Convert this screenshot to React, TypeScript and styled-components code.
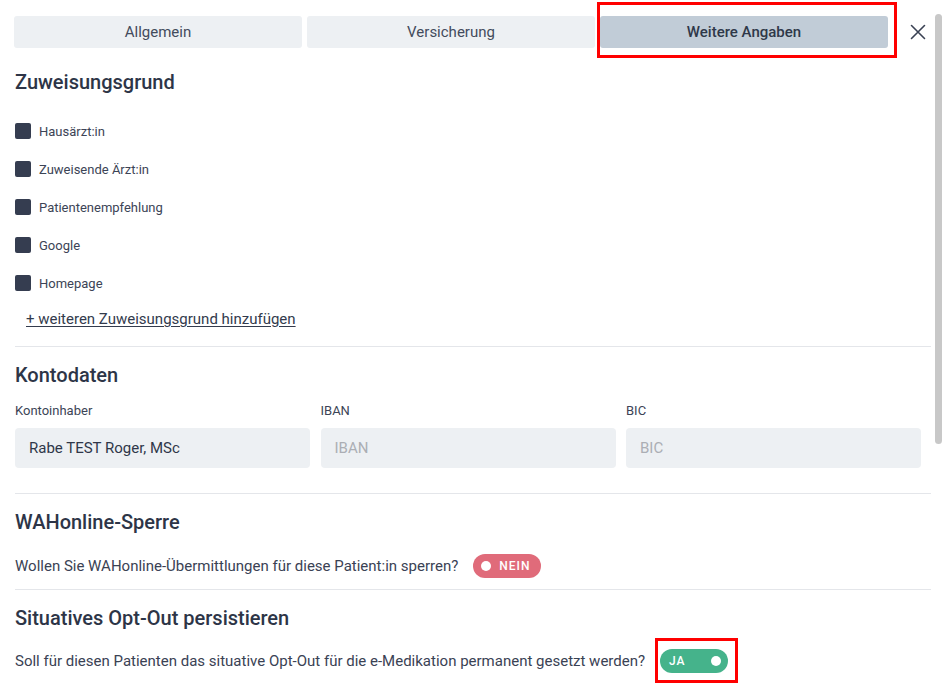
import React from "react";
import styled, { createGlobalStyle } from "styled-components";

const Global = createGlobalStyle`
  html, body { margin: 0; padding: 0; background: #ffffff; }
  body { font-family: Roboto, "Noto Sans", "Liberation Sans", sans-serif; color: #333b4e; }
  * { box-sizing: border-box; }
`;

const Page = styled.div`
  position: relative;
  width: 950px;
  height: 683px;
  overflow: hidden;
  padding: 16px 19px 0 15px;
`;

const TabRow = styled.div`
  display: flex;
  align-items: center;
  height: 32px;
  margin-left: -1px;
`;

const Tabs = styled.div`
  display: flex;
  gap: 5px;
  flex: 0 0 874px;
`;

const Tab = styled.button<{ $active?: boolean }>`
  flex: 1;
  height: 32px;
  border: none;
  border-radius: 3px;
  background: ${(p) => (p.$active ? "#c1ccd7" : "#edf0f3")};
  color: ${(p) => (p.$active ? "#2f3849" : "#434b5c")};
  font-family: inherit;
  font-size: 15px;
  font-weight: ${(p) => (p.$active ? 500 : 400)};
  cursor: pointer;
`;

const CloseButton = styled.button`
  flex: 0 0 44px;
  height: 32px;
  display: flex;
  align-items: center;
  justify-content: center;
  background: transparent;
  border: none;
  padding: 0 0 0 16px;
  color: #3a4254;
`;

const Section = styled.section<{ $divider?: boolean; $pb: number }>`
  border-top: ${(p) => (p.$divider ? "1px solid #e4e6ea" : "none")};
  padding-bottom: ${(p) => p.$pb}px;
  width: 916px;
`;

const Heading = styled.h2<{ $mt: number; $mb: number }>`
  margin: ${(p) => p.$mt}px 0 ${(p) => p.$mb}px 0;
  font-size: 20px;
  line-height: 24px;
  font-weight: 500;
  color: #2d3547;
`;

const CheckList = styled.div`
  display: flex;
  flex-direction: column;
`;

const CheckRow = styled.label`
  display: flex;
  align-items: center;
  gap: 8px;
  height: 38px;
  font-size: 13px;
  color: #3c4456;
`;

const Box = styled.span`
  width: 16px;
  height: 16px;
  border-radius: 2px;
  background: #353d50;
  flex: 0 0 16px;
`;

const AddLink = styled.a`
  display: inline-block;
  margin: 7px 0 0 11px;
  font-size: 15px;
  line-height: 20px;
  color: #333b4d;
  text-decoration: underline;
  text-underline-offset: 2px;
`;

const FieldGrid = styled.div`
  display: grid;
  grid-template-columns: repeat(3, 295px);
  column-gap: 10.5px;
`;

const Field = styled.div`
  display: flex;
  flex-direction: column;
`;

const FieldLabel = styled.div`
  font-size: 13px;
  line-height: 16px;
  color: #3c4456;
  margin: 1px 0 9px;
`;

const Input = styled.input`
  height: 40px;
  border: none;
  border-radius: 4px;
  background: #edf0f3;
  padding: 0 14px;
  font-family: inherit;
  font-size: 15px;
  color: #2f3749;
  outline: none;
  &::placeholder { color: #abaeb4; }
`;

const Question = styled.div`
  display: flex;
  align-items: center;
  gap: 15px;
  font-size: 15px;
  color: #3a4254;
`;

const Toggle = styled.button<{ $on: boolean }>`
  display: flex;
  align-items: center;
  flex-direction: ${(p) => (p.$on ? "row" : "row-reverse")};
  justify-content: ${(p) => (p.$on ? "space-between" : "flex-end")};
  gap: 8px;
  width: 68px;
  height: 24px;
  border: none;
  border-radius: 12px;
  padding: ${(p) => (p.$on ? "0 7px 0 9px" : "0 8px")};
  background: ${(p) => (p.$on ? "#45b38b" : "#e06b7a")};
  color: #ffffff;
  font-family: inherit;
  font-size: 12px;
  font-weight: 500;
  letter-spacing: 1px;
`;

const Knob = styled.span`
  width: 10px;
  height: 10px;
  border-radius: 50%;
  background: #ffffff;
  flex: 0 0 10px;
`;

const Scrollbar = styled.div`
  position: absolute;
  left: 935px;
  top: 14px;
  width: 7px;
  height: 430px;
  border-radius: 4px;
  background: #c8c8c8;
`;

const Highlight = styled.div<{ $x: number; $y: number; $w: number; $h: number }>`
  position: absolute;
  left: ${(p) => p.$x}px;
  top: ${(p) => p.$y}px;
  width: ${(p) => p.$w}px;
  height: ${(p) => p.$h}px;
  border: 3px solid #ff0000;
  pointer-events: none;
`;

const reasons = ["Hausärzt:in", "Zuweisende Ärzt:in", "Patientenempfehlung", "Google", "Homepage"];

export default function App() {
  return (
    <>
      <Global />
      <Page>
        <TabRow>
          <Tabs>
            <Tab>Allgemein</Tab>
            <Tab>Versicherung</Tab>
            <Tab $active>Weitere Angaben</Tab>
          </Tabs>
          <CloseButton aria-label="Schließen">
            <svg width="16" height="16" viewBox="0 0 16 16" fill="none" stroke="currentColor" strokeWidth="1.6" strokeLinecap="round">
              <path d="M1.5 1.5 L14.5 14.5 M14.5 1.5 L1.5 14.5" />
            </svg>
          </CloseButton>
        </TabRow>

        <Section $pb={17}>
          <Heading $mt={22} $mb={18}>Zuweisungsgrund</Heading>
          <CheckList>
            {reasons.map((r) => (
              <CheckRow key={r}>
                <Box />
                {r}
              </CheckRow>
            ))}
          </CheckList>
          <AddLink href="#">+ weiteren Zuweisungsgrund hinzufügen</AddLink>
        </Section>

        <Section $divider $pb={25}>
          <Heading $mt={16} $mb={15}>Kontodaten</Heading>
          <FieldGrid>
            <Field>
              <FieldLabel>Kontoinhaber</FieldLabel>
              <Input defaultValue="Rabe TEST Roger, MSc" />
            </Field>
            <Field>
              <FieldLabel>IBAN</FieldLabel>
              <Input placeholder="IBAN" />
            </Field>
            <Field>
              <FieldLabel>BIC</FieldLabel>
              <Input placeholder="BIC" />
            </Field>
          </FieldGrid>
        </Section>

        <Section $divider $pb={11}>
          <Heading $mt={16} $mb={20}>WAHonline-Sperre</Heading>
          <Question>
            Wollen Sie WAHonline-Übermittlungen für diese Patient:in sperren?
            <Toggle $on={false}>
              NEIN
              <Knob />
            </Toggle>
          </Question>
        </Section>

        <Section $divider $pb={10}>
          <Heading $mt={16} $mb={19}>Situatives Opt-Out persistieren</Heading>
          <Question>
            Soll für diesen Patienten das situative Opt-Out für die e-Medikation permanent gesetzt werden?
            <Toggle $on>
              JA
              <Knob />
            </Toggle>
          </Question>
        </Section>

        <Scrollbar />
        <Highlight $x={597} $y={2} $w={300} $h={56} />
        <Highlight $x={655} $y={638} $w={83} $h={45} />
      </Page>
    </>
  );
}
